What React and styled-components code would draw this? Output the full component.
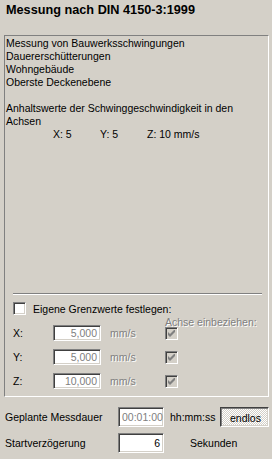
import React from "react";
import styled, { createGlobalStyle } from "styled-components";

const Global = createGlobalStyle`
  body {
    margin: 0;
    background: #d4d0c8;
  }
`;

const Dialog = styled.div`
  width: 272px;
  height: 459px;
  background: #d4d0c8;
  display: flex;
  flex-direction: column;
  font-family: "Liberation Sans", Arial, sans-serif;
  font-size: 10.5px;
  color: #000;
  box-sizing: border-box;
  overflow: hidden;
`;

const Title = styled.div`
  height: 35px;
  box-sizing: border-box;
  padding: 3px 0 0 6px;
  font-size: 12.7px;
  font-weight: bold;
  line-height: 14px;
`;

const Panel = styled.div`
  margin: 0 3px 0 4px;
  height: 362px;
  box-sizing: border-box;
  border: 1px solid;
  border-color: #808080 #fff #fff #808080;
  padding-bottom: 7px;
  display: flex;
  flex-direction: column;
`;

const Info = styled.div`
  flex: 1;
  padding: 1px 0 0 1px;
  line-height: 13px;
`;

const Line = styled.div`
  height: 13px;
  white-space: nowrap;
`;

const Values = styled.div`
  display: flex;
  padding-left: 47px;
  height: 13px;
  span {
    width: 47px;
    white-space: nowrap;
  }
`;

const Separator = styled.div`
  margin: 0 6px 0 8px;
  border-top: 1px solid #808080;
  border-bottom: 1px solid #fff;
`;

const CheckRow = styled.label`
  display: flex;
  align-items: center;
  gap: 7px;
  margin: 7px 0 0 8px;
  height: 13px;
`;

const Box = styled.span`
  width: 13px;
  height: 13px;
  box-sizing: border-box;
  flex: none;
  display: flex;
  align-items: center;
  justify-content: center;
  background: ${(p) => (p.disabled ? "#d4d0c8" : "#fff")};
  border: 1px solid;
  border-color: #808080 #fff #fff #808080;
  box-shadow: inset 1px 1px 0 #404040, inset -1px -1px 0 #d4d0c8;
`;

const Fields = styled.div`
  display: flex;
  padding-left: 8px;
`;

const FieldGrid = styled.div`
  display: grid;
  grid-template-columns: 40px 48px 64px;
  grid-auto-rows: 16px;
  row-gap: 8px;
  padding-top: 10px;
  align-items: center;
`;

const Dim = styled.span`
  color: #808080;
  text-shadow: 1px 1px 0 #fff;
  white-space: nowrap;
`;

const Unit = styled(Dim)`
  padding-left: 9px;
`;

const AxisCol = styled.div`
  display: flex;
  flex-direction: column;
  padding-top: 3px;
`;

const AxisHead = styled(Dim)`
  line-height: 9px;
  height: 9px;
`;

const AxisBoxes = styled.div`
  display: flex;
  flex-direction: column;
  gap: 11px;
`;

const Edit = styled.div`
  height: ${(p) => p.h || 16}px;
  box-sizing: border-box;
  background: #fff;
  color: ${(p) => (p.disabled ? "#808080" : "#000")};
  border: 1px solid;
  border-color: #808080 #fff #fff #808080;
  box-shadow: inset 1px 1px 0 #404040, inset -1px -1px 0 #d4d0c8;
  text-align: right;
  padding: 0 3px;
  line-height: ${(p) => (p.h || 16) - 2}px;
  white-space: nowrap;
`;

const Footer = styled.div`
  display: grid;
  grid-template-columns: 113px 46px 1fr;
  grid-auto-rows: 20px;
  row-gap: 6px;
  padding: 10px 3px 0 5px;
  align-items: center;
`;

const Tail = styled.div`
  display: flex;
  align-items: center;
  padding-left: ${(p) => p.pad || 0}px;
`;

const Toggle = styled.div`
  margin-left: auto;
  width: 49px;
  height: 20px;
  box-sizing: border-box;
  border: 1px solid;
  border-color: #404040 #fff #fff #404040;
  box-shadow: inset 1px 1px 0 #808080, inset -1px -1px 0 #d4d0c8;
  background: repeating-conic-gradient(#fff 0 25%, #d4d0c8 0 50%) 0 0 / 2px 2px;
  display: flex;
  align-items: center;
  justify-content: center;
  padding-top: 2px;
  padding-left: 2px;
`;

const Check = ({ disabled, checked }) => (
  <Box disabled={disabled}>
    {checked && (
      <svg width="7" height="7" viewBox="0 0 7 7">
        <path
          d="M0 2v3l2 2 5-5V-1L2 4z"
          fill={disabled ? "#808080" : "#000"}
        />
      </svg>
    )}
  </Box>
);

const limits = [
  { axis: "X:", value: "5,000" },
  { axis: "Y:", value: "5,000" },
  { axis: "Z:", value: "10,000" },
];

export default function App() {
  return (
    <Dialog>
      <Global />
      <Title>Messung nach DIN 4150-3:1999</Title>
      <Panel>
        <Info>
          <Line>Messung von Bauwerksschwingungen</Line>
          <Line>Dauererschütterungen</Line>
          <Line>Wohngebäude</Line>
          <Line>Oberste Deckenebene</Line>
          <Line />
          <Line>Anhaltswerte der Schwinggeschwindigkeit in den</Line>
          <Line>Achsen</Line>
          <Values>
            <span>X: 5</span>
            <span>Y: 5</span>
            <span>Z: 10 mm/s</span>
          </Values>
        </Info>
        <Separator />
        <CheckRow>
          <Check />
          Eigene Grenzwerte festlegen:
        </CheckRow>
        <Fields>
          <FieldGrid>
            {limits.map((l) => (
              <React.Fragment key={l.axis}>
                <span>{l.axis}</span>
                <Edit disabled>{l.value}</Edit>
                <Unit>mm/s</Unit>
              </React.Fragment>
            ))}
          </FieldGrid>
          <AxisCol>
            <AxisHead>Achse einbeziehen:</AxisHead>
            <AxisBoxes>
              {limits.map((l) => (
                <Check key={l.axis} disabled checked />
              ))}
            </AxisBoxes>
          </AxisCol>
        </Fields>
      </Panel>
      <Footer>
        <span>Geplante Messdauer</span>
        <Edit h={20} disabled>00:01:00</Edit>
        <Tail pad={6}>
          hh:mm:ss
          <Toggle>endlos</Toggle>
        </Tail>
        <span>Startverzögerung</span>
        <Edit h={20}>6</Edit>
        <Tail pad={26}>Sekunden</Tail>
      </Footer>
    </Dialog>
  );
}
